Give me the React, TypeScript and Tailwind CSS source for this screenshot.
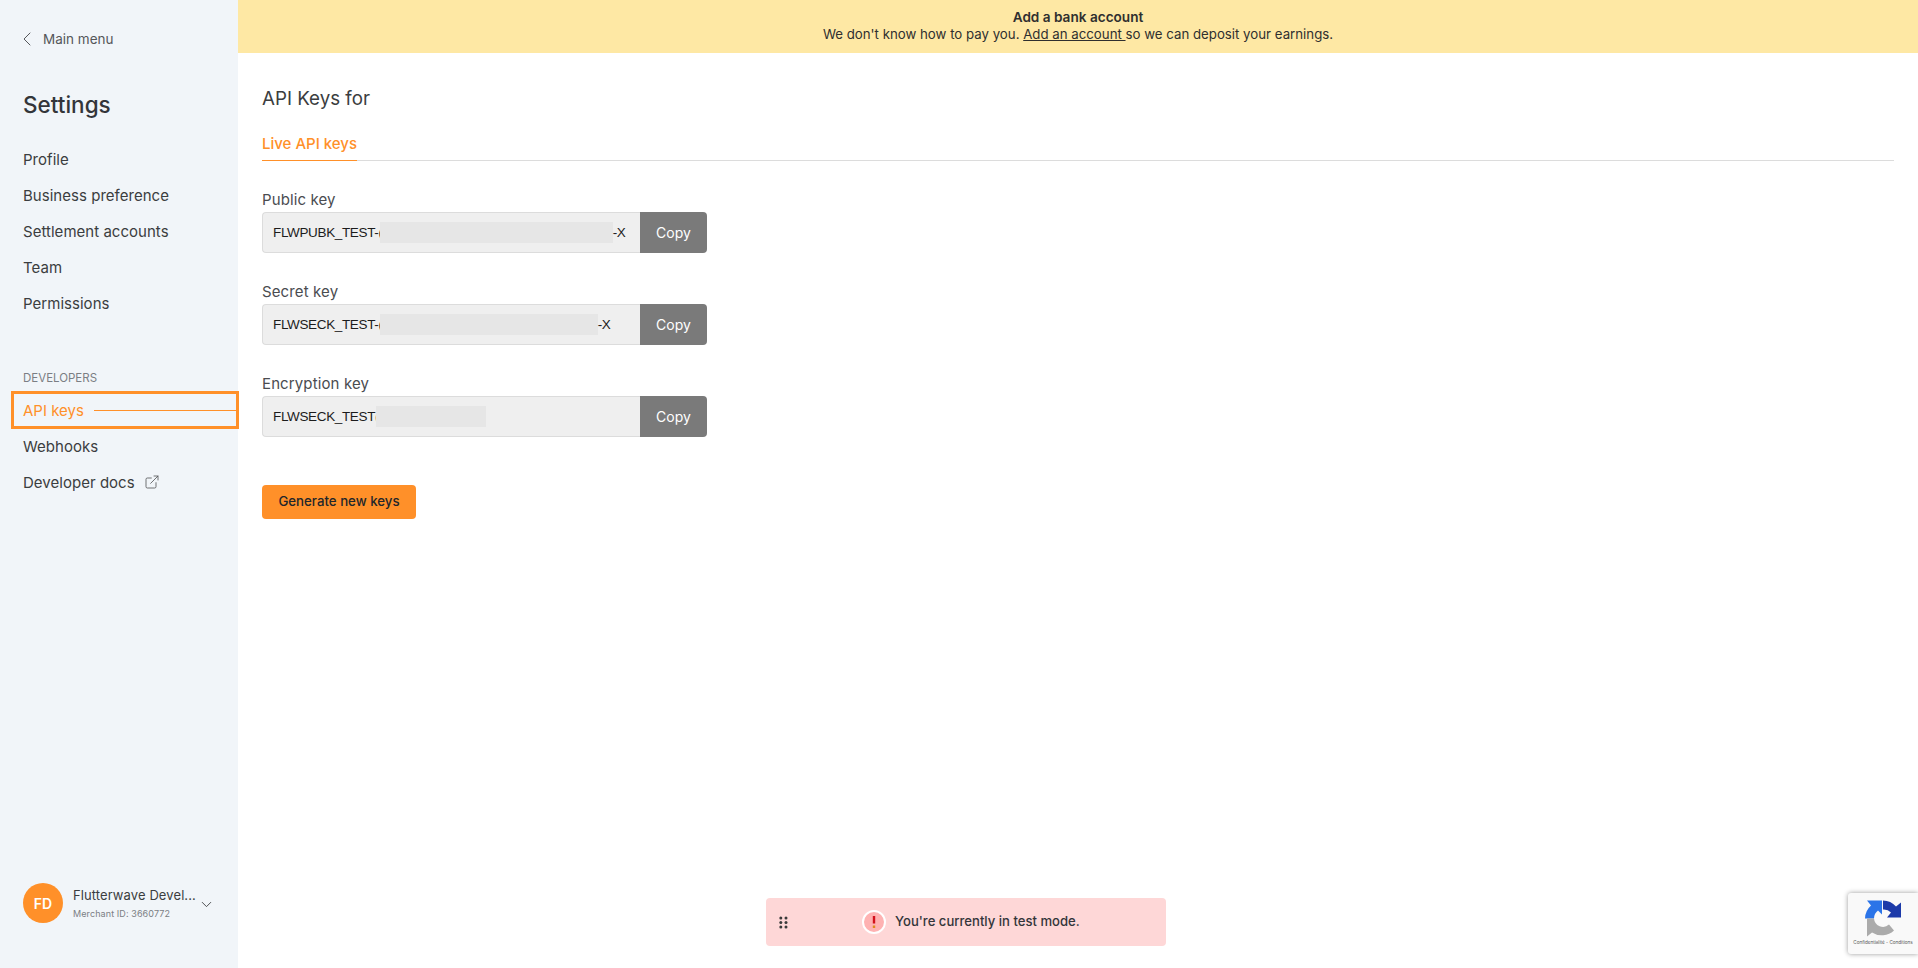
import React from "react";
import { ChevronLeft, ChevronDown, ExternalLink } from "lucide-react";

const font = "font-['Inter','Liberation_Sans',sans-serif]";

function NavItem({ label, children }: { label: string; children?: React.ReactNode }) {
  return (
    <div className="flex h-9 items-center text-[15px] tracking-[0.03px] text-[#3b3d40]">
      {label}
      {children}
    </div>
  );
}

function KeyRow({ label, prefix, suffix, maskW, maskMl, mb }: { label: string; prefix: string; suffix: string; maskW: string; maskMl: string; mb: string }) {
  return (
    <div className={mb}>
      <div className="mb-[2px] h-[21px] pt-[1px] text-[15px] leading-[20px] tracking-[0.12px] text-[#4a4c50]">{label}</div>
      <div className="flex h-[41px] w-[445px]">
        <div className="flex w-[378px] items-center rounded-l-[4px] border border-r-0 border-[#dcdcdc] bg-[#efefef] pl-[10px] font-['Liberation_Sans',sans-serif] text-[13.5px] tracking-[-0.35px] text-[#1c1c1c]">
          <span className="mt-[1px] whitespace-nowrap">{prefix}</span>
          <span className={`h-[21px] shrink-0 bg-[#e6e6e6] ${maskW} ${maskMl}`} />
          <span className="mt-[1px]">{suffix}</span>
        </div>
        <div className="flex w-[67px] items-center justify-center rounded-r-[4px] bg-[#7a7a7a] text-[14px] text-white">Copy</div>
      </div>
    </div>
  );
}

export default function App() {
  return (
    <div className={`${font} relative flex h-[968px] w-[1918px] overflow-hidden bg-white`}>
      <aside className="flex w-[238px] shrink-0 flex-col bg-[#f1f5f9] pl-[23px]">
        <div className="mt-[29px] flex h-[20px] items-center text-[13.5px] text-[#55575a]">
          <ChevronLeft className="ml-[-8px] mr-[4px] h-6 w-6 shrink-0" strokeWidth={1} />
          Main menu
        </div>
        <div className="mt-[40px] h-[32px] text-[22.5px] font-medium leading-[32px] text-[#33353a]">Settings</div>
        <nav className="mt-[21px]">
          <NavItem label="Profile" />
          <NavItem label="Business preference" />
          <NavItem label="Settlement accounts" />
          <NavItem label="Team" />
          <NavItem label="Permissions" />
        </nav>
        <div className="mt-[48px] h-[16px] text-[11.5px] leading-[16px] text-[#7b7e84]">DEVELOPERS</div>
        <div className="relative ml-[-12px] mt-[5px] flex h-[38px] w-[228px] items-center border-[3px] border-[#ff9029] pl-[9px] text-[15px] text-[#ff9029]">
          <span className="mt-[2px]">API keys</span>
          <div className="ml-[10px] h-px flex-1 bg-[#ff9029]" />
        </div>
        <div>
          <NavItem label="Webhooks" />
          <NavItem label="Developer docs">
            <ExternalLink className="mb-[2px] ml-[9px] h-4 w-4 text-[#55575a]" strokeWidth={1.25} />
          </NavItem>
        </div>
        <div className="mb-[45px] mt-auto flex items-center">
          <div className="flex h-10 w-10 shrink-0 items-center justify-center rounded-full bg-[#ff9029] text-[14px] font-semibold text-white">FD</div>
          <div className="ml-[10px] w-[124px]">
            <div className="truncate text-[13px] leading-[18px] tracking-[0.1px] text-[#3b3d40]">Flutterwave Devel...</div>
            <div className="mt-[4px] text-[9px] leading-[12px] tracking-[0.1px] text-[#7b7e84]">Merchant ID: 3660772</div>
          </div>
          <ChevronDown className="ml-[1px] mt-[3px] h-[17px] w-[17px] text-[#3b3d40]" strokeWidth={1.25} />
        </div>
      </aside>

      <main className="flex min-w-0 flex-1 flex-col">
        <div className="flex h-[53px] flex-col items-center justify-center bg-[#fee8a4] pb-[2px] text-[13.25px] leading-[17px] text-[#2f2f2f]">
          <div className="text-[13.6px] font-semibold">Add a bank account</div>
          <div>
            We don't know how to pay you. <span className="underline">Add an account </span>so we can deposit your earnings.
          </div>
        </div>
        <div className="pl-[24px] pr-[24px]">
          <h1 className="mt-[32px] h-[27px] text-[18.75px] leading-[27px] text-[#3b3d40]">API Keys for</h1>
          <div className="mt-[22px] border-b border-[#dcdcdc]">
            <div className="mb-[-1px] h-[27px] w-fit border-b border-[#ff9029] text-[15px] font-medium leading-[20px] text-[#ff9029]">Live API keys</div>
          </div>
          <div className="mt-[28px]">
            <KeyRow label="Public key" prefix="FLWPUBK_TEST-(" suffix="-X" maskW="w-[233px]" maskMl="ml-[-3px]" mb="mb-[28px]" />
            <KeyRow label="Secret key" prefix="FLWSECK_TEST-(" suffix="-X" maskW="w-[218px]" maskMl="ml-[-3px]" mb="mb-[28px]" />
            <KeyRow label="Encryption key" prefix="FLWSECK_TEST(" suffix="" maskW="w-[110px]" maskMl="ml-[-3px]" mb="mb-[48px]" />
          </div>
          <button className="flex h-[34px] w-[154px] items-center justify-center rounded-[4px] bg-[#ff9029] text-[13.25px] font-medium text-[#22262b]">Generate new keys</button>
        </div>
      </main>

      <div className="absolute left-[766px] top-[898px] flex h-[48px] w-[400px] items-center rounded-[4px] bg-[#fed7d7] text-[13.1px] font-medium text-[#33353a]">
        <svg className="ml-[13px]" width="9" height="13" viewBox="0 0 9 13" fill="#3a3a3a">
          <circle cx="1.8" cy="2" r="1.5" /><circle cx="7" cy="2" r="1.5" />
          <circle cx="1.8" cy="6.5" r="1.5" /><circle cx="7" cy="6.5" r="1.5" />
          <circle cx="1.8" cy="11" r="1.5" /><circle cx="7" cy="11" r="1.5" />
        </svg>
        <div className="relative ml-[74px] flex h-6 w-6 items-center justify-center rounded-full border-2 border-white bg-[#feb2b2]">
          <svg width="4" height="12" viewBox="0 0 4 12">
            <rect x="0.8" y="0" width="2.4" height="7.5" fill="#d3111c" />
            <rect x="0.8" y="9.5" width="2.4" height="2.5" fill="#dd8a1f" />
          </svg>
        </div>
        <span className="ml-[9px]">You're currently in test mode.</span>
      </div>

      <div className="absolute left-[1848px] top-[893px] flex h-[61px] w-[70px] flex-col items-center rounded-l-[3px] bg-[#f9f9f9] pt-[6px] shadow-[0_0_5px_rgba(0,0,0,0.4)]">
        <svg width="38" height="39" viewBox="0 0 38 38">
          <path d="M1 19 A18 18 0 0 1 7 6 L3 1 H18 V15 L14 11 A10 10 0 0 0 10 19 Z" fill="#2b74e8" />
          <path d="M19 1 A18 18 0 0 1 32 7 L37 3 V18 H23 L27 13 A10 10 0 0 0 19 10 Z" fill="#1c3aa9" />
          <path d="M1 19 H10 A9 9 0 0 0 25 25 L30 31 A18 18 0 0 1 8 33 L3 37 V19 Z" fill="#ababab" />
        </svg>
        <div className="mt-[1px] whitespace-nowrap text-[4.6px] leading-[7px] text-[#555]">Confidentialité - Conditions</div>
      </div>
    </div>
  );
}
